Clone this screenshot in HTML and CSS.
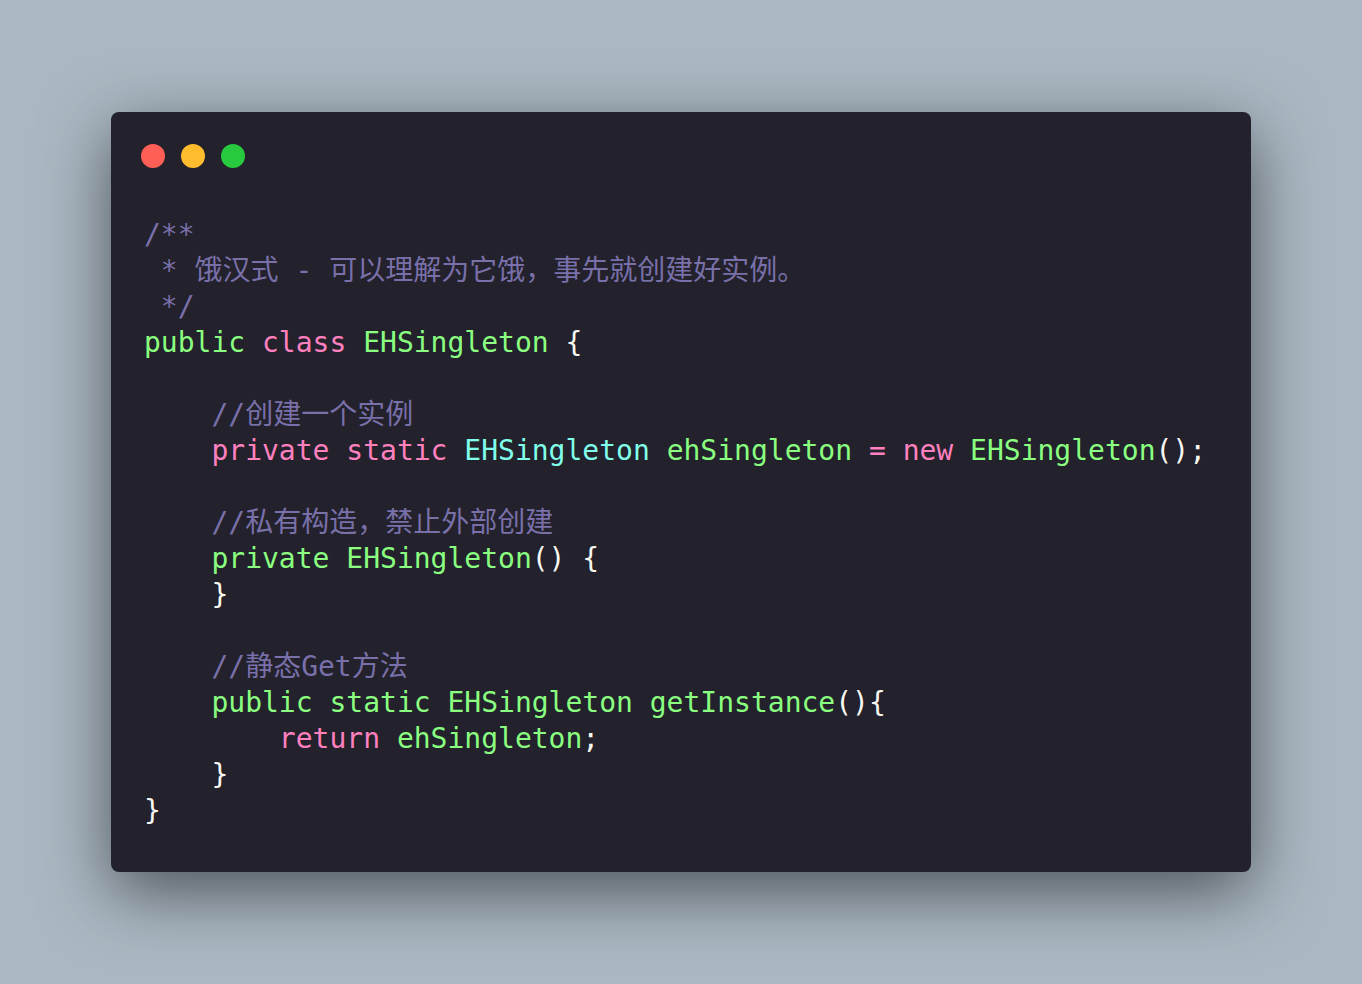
FILE: index.html
```html
<!DOCTYPE html>
<html lang="zh">
<head>
<meta charset="utf-8">
<title>EHSingleton</title>
<link rel="stylesheet" href="styles.css">
</head>
<body>
<div class="stage">
  <div class="window">
    <div class="controls">
      <span class="dot red"></span>
      <span class="dot yellow"></span>
      <span class="dot green"></span>
    </div>
<pre class="code"><span class="cm">/**
 * 饿汉式 - 可以理解为它饿，事先就创建好实例。
 */</span>
<span class="g">public</span> <span class="p">class</span> <span class="g">EHSingleton</span> <span class="f">{</span>

    <span class="cm">//创建一个实例</span>
    <span class="p">private</span> <span class="p">static</span> <span class="c">EHSingleton</span> <span class="g">ehSingleton</span> <span class="p">=</span> <span class="p">new</span> <span class="g">EHSingleton</span><span class="f">();</span>

    <span class="cm">//私有构造，禁止外部创建</span>
    <span class="g">private</span> <span class="g">EHSingleton</span><span class="f">() {</span>
    <span class="f">}</span>

    <span class="cm">//静态Get方法</span>
    <span class="g">public</span> <span class="g">static</span> <span class="g">EHSingleton</span> <span class="g">getInstance</span><span class="f">(){</span>
        <span class="p">return</span> <span class="g">ehSingleton</span><span class="f">;</span>
    <span class="f">}</span>
<span class="f">}</span></pre>
  </div>
</div>
</body>
</html>
```

FILE: styles.css
```css
html, body {
  margin: 0;
  padding: 0;
}

body {
  background: #abb8c3;
}

.stage {
  height: 984px;
  display: flex;
  align-items: center;
  justify-content: center;
}

.window {
  width: 1140px;
  height: 760px;
  box-sizing: border-box;
  background: #22212c;
  border-radius: 8px;
  box-shadow: 0 20px 68px rgba(0, 0, 0, 0.55);
  padding: 32px 34px 0 30px;
}

.controls {
  display: flex;
  gap: 16px;
  height: 24px;
}

.dot {
  width: 24px;
  height: 24px;
  border-radius: 50%;
  display: block;
}

.red { background: #ff5f56; }
.yellow { background: #ffbd2e; }
.green { background: #27c93f; }

.code {
  margin: 49px 0 0 3px;
  font-family: "DejaVu Sans Mono", "Noto Sans CJK SC", monospace;
  font-size: 28px;
  line-height: 36px;
  color: #f8f8f2;
  white-space: pre;
}

.cm { color: #7970a9; }
.g { color: #8aff80; }
.p { color: #ff80bf; }
.c { color: #80ffea; }
.f { color: #f8f8f2; }
```
